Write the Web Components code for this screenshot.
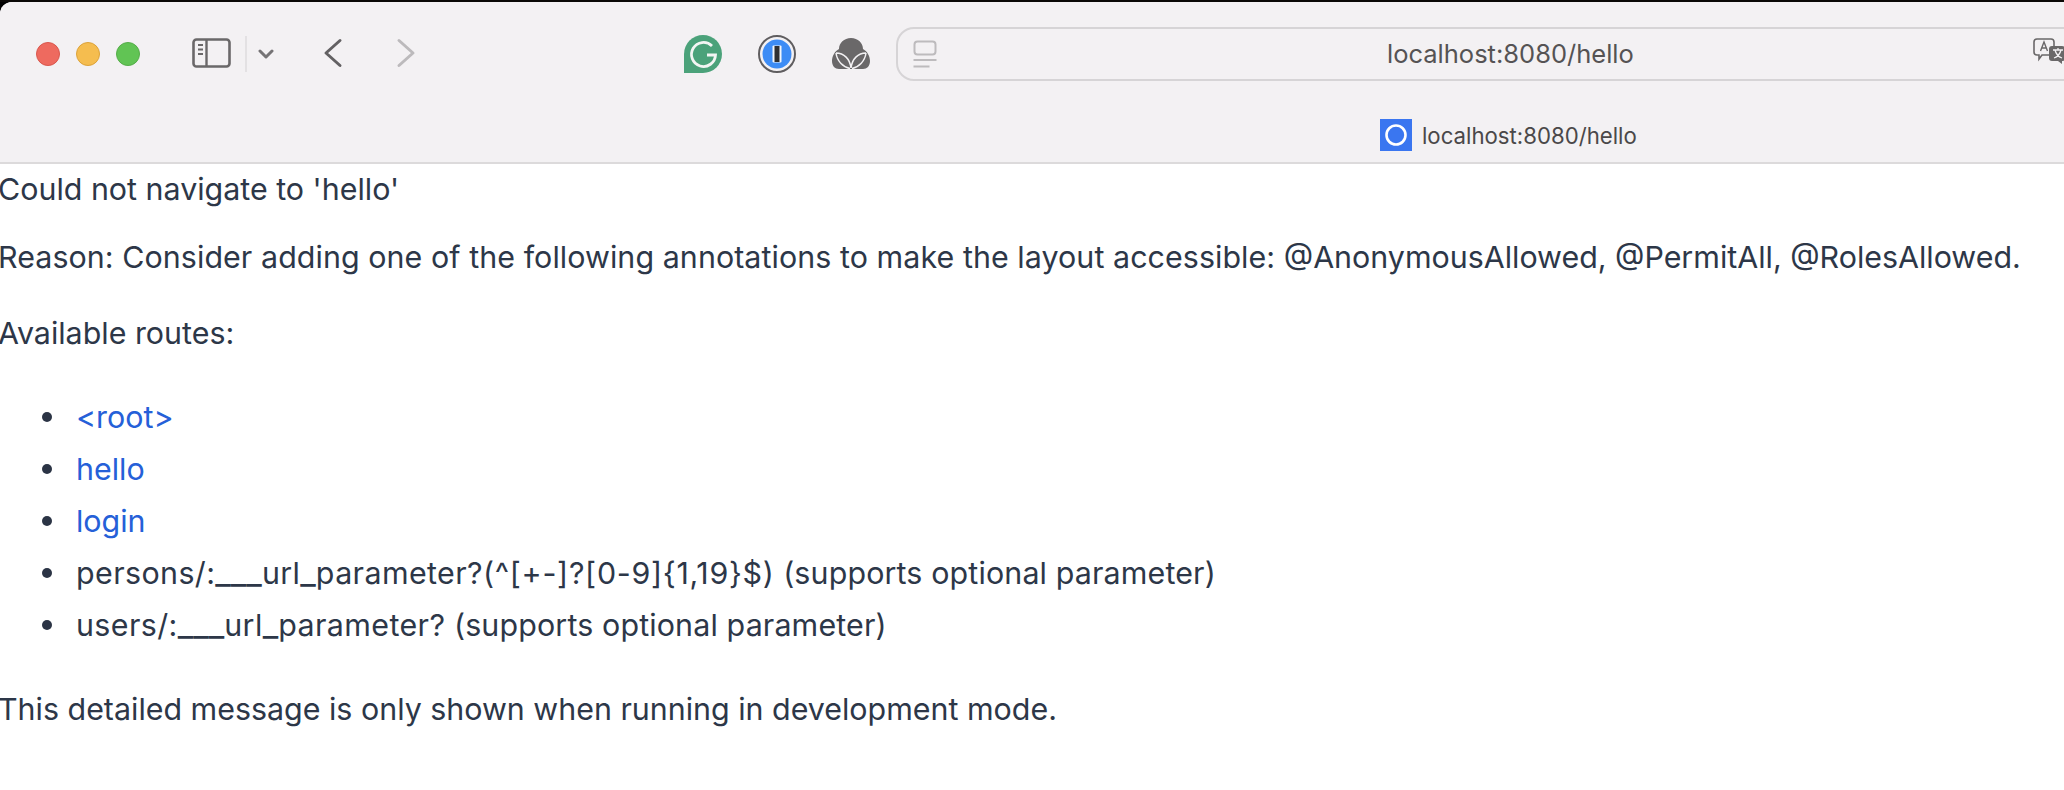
<!DOCTYPE html>
<html lang="en"><head><meta charset="utf-8"><title>localhost:8080/hello</title>
<style>
html,body{margin:0;padding:0;background:#fff;overflow:hidden;height:790px}
body{font-family:Inter,"Liberation Sans",sans-serif}
</style></head>
<body>
<safari-window>
  <safari-toolbar slot="toolbar" url="localhost:8080/hello"></safari-toolbar>
  <route-error>
    <p style="margin:0 0 16px">Could not navigate to 'hello'</p>
    <p style="margin:0 0 24px"><span style="letter-spacing:.07px">Reason: Consider adding one of the following annotations to make the layout accessible: </span>@AnonymousAllowed, @PermitAll, @RolesAllowed.</p>
    <p style="margin:0 0 32px">Available routes:</p>
    <route-list>
      <route-item href="#"><a>&lt;root&gt;</a></route-item>
      <route-item href="#"><a>hello</a></route-item>
      <route-item href="#"><a>login</a></route-item>
      <route-item><span style="letter-spacing:.4px">persons/:</span><span style="font-size:34px;line-height:0">___</span><span style="letter-spacing:.4px">url</span><span style="font-size:34px;line-height:0">_</span><span style="letter-spacing:.4px">parameter?</span><span style="letter-spacing:.7px">(^[+-]?[0-9]{1,19}$)</span> <span style="letter-spacing:.14px">(supports optional parameter)</span></route-item>
      <route-item><span style="letter-spacing:.4px">users/:</span><span style="font-size:34px;line-height:0">___</span><span style="letter-spacing:.4px">url</span><span style="font-size:34px;line-height:0">_</span><span style="letter-spacing:.4px">parameter?</span> <span style="letter-spacing:.14px">(supports optional parameter)</span></route-item>
    </route-list>
    <p style="margin:32px 0 0">This detailed message is only shown when running in development mode.</p>
  </route-error>
</safari-window>
<script>
function def(name, html, init){
  customElements.define(name, class extends HTMLElement{
    constructor(){super();this.attachShadow({mode:'open'}).innerHTML=html;}
    connectedCallback(){ if(init) init(this); }
  });
}
def('safari-window',`<style>
:host{display:flex;flex-direction:column;width:2064px;height:790px;background:#000;overflow:hidden}
.top{height:2px;flex:none;background:#0a0806}
.body{flex:1;background:#fff;border-radius:12px 0 0 0;overflow:hidden;display:flex;flex-direction:column}
</style><div class="top"></div><div class="body"><slot name="toolbar"></slot><slot></slot></div>`);

def('traffic-lights',`<style>
:host{display:flex;gap:16px;flex:none}
i{display:block;width:24px;height:24px;border-radius:50%;box-sizing:border-box;border:1px solid}
.r{background:#ee6a5f;border-color:#d9574d}.y{background:#f5bd4f;border-color:#dca33a}.g{background:#61c454;border-color:#55ad49}
</style><i class="r"></i><i class="y"></i><i class="g"></i>`);

def('safari-toolbar',`<style>
:host{display:block;flex:none;height:162px;box-sizing:border-box;background:#f3f1f3;border-bottom:2px solid #dcdadb;font-family:Inter,"Liberation Sans",sans-serif;overflow:hidden}
.row{display:flex;align-items:center;height:54px;margin-top:25px;padding-left:36px;width:2300px}
svg{display:block;flex:none}
.sidebar{margin-left:52px}
.sep{width:2px;height:36px;background:#e3e1e3;margin-left:13px;flex:none}
.chev{margin-left:11px}
.back{margin-left:49px}
.fwd{margin-left:53px}
.gr{margin-left:268px}
.op{margin-left:36px}
.tr{margin-left:36px}
.url{margin-left:26px;width:1400px;height:54px;box-sizing:border-box;border:2px solid #d6d4d6;border-radius:18px;flex:none;display:flex;align-items:center;position:relative}
.url svg.read{margin-left:15px}
.url span{position:absolute;left:489px;top:0;line-height:50px;font-size:25.500px;color:#555354;white-space:nowrap}
.trans{position:absolute;left:1135px;top:9px}
.tab{display:flex;align-items:center;height:32px;margin-top:38px;padding-left:1380px}
.fav{width:32px;height:32px;background:#3a76f0;display:flex;align-items:center;justify-content:center;flex:none}
.tab span{margin-left:10px;font-size:22.200px;color:#4a4849;white-space:nowrap}
</style>
<div class="row">
  <traffic-lights></traffic-lights>
  <svg class="sidebar" width="40" height="32" viewBox="0 0 40 32" fill="none" stroke="#6a6869"><rect x="1.500" y="1.500" width="36" height="27" rx="3" stroke-width="2.600"/><path d="M14.500 2v26" stroke-width="2.400"/><path d="M6 7h5M6 11.500h5M6 16h5" stroke-width="1.800"/></svg>
  <div class="sep"></div>
  <svg class="chev" width="16" height="12" viewBox="0 0 16 12" fill="none" stroke="#757375" stroke-width="3" stroke-linecap="round" stroke-linejoin="round"><path d="M2 3l6 6 6-6"/></svg>
  <svg class="back" width="20" height="32" viewBox="0 0 20 32" fill="none" stroke="#636163" stroke-width="3" stroke-linecap="round" stroke-linejoin="round"><path d="M17 2.500L3 15l14 12.500"/></svg>
  <svg class="fwd" width="20" height="32" viewBox="0 0 20 32" fill="none" stroke="#bcbabc" stroke-width="3" stroke-linecap="round" stroke-linejoin="round"><path d="M3 2.500L17 15 3 27.500"/></svg>
  <svg class="gr" width="38" height="38" viewBox="0 0 38 38"><path d="M19 0a19 19 0 0 1 0 38H0V19A19 19 0 0 1 19 0z" fill="#4ba27a"/><path d="M28 11A12 12 0 1 0 31.500 20H23" fill="none" stroke="#f3f5f3" stroke-width="2.800"/></svg>
  <svg class="op" width="38" height="38" viewBox="0 0 38 38"><circle cx="19" cy="19" r="18" fill="#f3f1f3" stroke="#5f5d5f" stroke-width="2"/><circle cx="19" cy="19" r="14.500" fill="#3d8cf5"/><rect x="14.500" y="10.500" width="9" height="17" rx="1" fill="#f3f6fa"/><rect x="16.500" y="11" width="5" height="16" fill="#2f2f31"/></svg>
  <svg class="tr" width="38" height="32" viewBox="0 0 38 32"><path d="M19 0C26 0 31 5 31 11C35 13 38 18 38 23C38 28 35 31 31 31H7C3 31 0 28 0 23C0 18 3 13 7 11C7 5 12 0 19 0Z" fill="#6a6869"/><path d="M4 15C12 15 18 21 19 30C20 21 26 15 34 15M4 15C5 23 11 29 18 30.500M34 15C33 23 27 29 20 30.500" fill="none" stroke="#f3f1f3" stroke-width="1.500"/></svg>
  <div class="url">
    <svg class="read" width="26" height="32" viewBox="0 0 26 32" fill="none" stroke="#bdbbbd"><rect x="1.500" y="3.500" width="21" height="13" rx="3" stroke-width="2"/><path d="M0.500 22h23" stroke-width="2"/><path d="M0.500 28.500h16" stroke-width="2"/></svg>
    <span>localhost:8080/hello</span>
    <svg class="trans" width="31" height="32" viewBox="0 0 31 32"><path d="M4 1h14a3 3 0 0 1 3 3v10a3 3 0 0 1-3 3h-9l-3 4v-4H4a3 3 0 0 1-3-3V4a3 3 0 0 1 3-3z" fill="#f3f1f3" stroke="#6a6869" stroke-width="1.600"/><path d="M7.500 13L11 4l3.500 9M8.700 10h4.600" fill="none" stroke="#6a6869" stroke-width="1.400"/><path d="M19 8h10a3 3 0 0 1 3 3v9a3 3 0 0 1-3 3v3l-4-3h-6a3 3 0 0 1-3-3v-9a3 3 0 0 1 3-3z" fill="#6a6869"/><path d="M20 12h10M25 10v2M22 12c1 4 4 7 7 8M28 12c-1 4-4 7-7 8" fill="none" stroke="#f3f1f3" stroke-width="1.300"/></svg>
  </div>
</div>
<div class="tab">
  <div class="fav"><svg width="22" height="22" viewBox="0 0 22 22"><circle cx="11" cy="11" r="9.500" fill="none" stroke="#fff" stroke-width="2.600"/></svg></div>
  <span>localhost:8080/hello</span>
</div>`);

def('route-error',`<style>
:host{display:block;font-family:Inter,"Liberation Sans",sans-serif;font-size:30.400px;line-height:52px;color:#2d3748;margin:-1px 0 0 -2px;white-space:nowrap}
</style><slot></slot>`);

def('route-list',`<style>:host{display:flex;flex-direction:column;padding-left:78px}</style><slot></slot>`);

def('route-item',`<style>
:host{display:block;position:relative}
:host::before{content:"";position:absolute;left:-34px;top:21px;width:10px;height:10px;border-radius:50%;background:#2b3445}
:host([href]){color:#2560d8}
</style><slot></slot>`);
</script>
</body></html>
